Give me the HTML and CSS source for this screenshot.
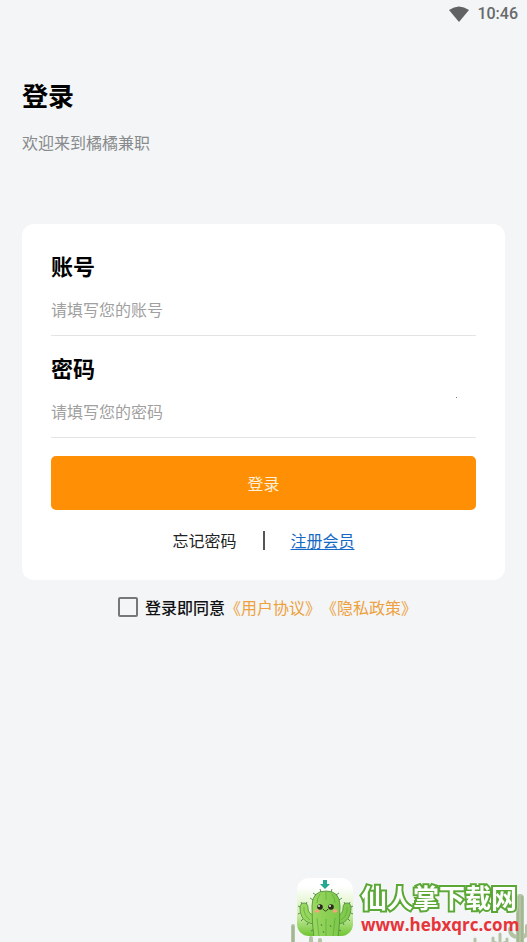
FILE: index.html
```html
<!DOCTYPE html>
<html lang="zh-CN">
<head>
<meta charset="utf-8">
<meta name="viewport" content="width=device-width, initial-scale=1">
<title>登录</title>
<link rel="stylesheet" href="styles.css">
</head>
<body>
<header class="status">
  <svg class="wifi" viewBox="0 0 20 16" aria-hidden="true"><path d="M0 4Q10-3 20 4L10 16Z"/></svg>
  <span>10:46</span>
</header>
<main class="page">
  <h1 class="title">登录</h1>
  <p class="subtitle">欢迎来到橘橘兼职</p>
  <form class="login">
    <section class="card">
      <div class="field">
        <label for="account">账号</label>
        <input id="account" type="text" placeholder="请填写您的账号">
      </div>
      <div class="field secret">
        <label for="password">密码</label>
        <input id="password" type="password" placeholder="请填写您的密码">
      </div>
      <button class="submit" type="submit">登录</button>
      <nav class="links">
        <a class="forgot" href="#forgot">忘记密码</a>
        <span class="divider"></span>
        <a class="register" href="#register">注册会员</a>
      </nav>
    </section>
    <div class="agree">
      <input id="agree" type="checkbox">
      <label for="agree">登录即同意</label>
      <a href="#terms">《用户协议》</a><a href="#privacy">《隐私政策》</a>
    </div>
  </form>
</main>
<aside class="brand">
  <svg class="scenery" viewBox="0 0 240 70" aria-hidden="true">
    <g fill="none" stroke="#b3c4a5" stroke-linecap="round">
      <path stroke-width="4" d="M6 54V72M24 66V72M33 68V72"/>
      <path stroke-width="3" d="M188 67V72M213 62V72M206 66V70L212 72M220 67V70L214 72"/>
      <path stroke-width="8" d="M233 26V72"/>
      <path stroke-width="4" d="M223 57Q223 65 232 65M240 54V61Q239 65 234 65"/>
    </g>
    <path d="M231 24V70M235 24V70M6 54V70" stroke="#93aa82" fill="none"/>
  </svg>
  <svg class="logo" viewBox="0 0 56 58" role="img" aria-label="仙人掌">
    <defs>
      <linearGradient id="tile" x2="0" y2="1"><stop offset=".15" stop-color="#fff"/><stop offset=".6" stop-color="#d5f0b4"/><stop offset="1" stop-color="#6fc531"/></linearGradient>
      <linearGradient id="skin"><stop stop-color="#9bd860"/><stop offset="1" stop-color="#7dc849"/></linearGradient>
      <clipPath id="clip"><rect width="56" height="58" rx="12"/></clipPath>
    </defs>
    <rect width="56" height="58" rx="12" fill="url(#tile)"/>
    <g clip-path="url(#clip)">
      <path d="M17 46C7 45 3 38 3 30Q3 25 7 25T11 30Q11 36 17 37M41 46C50 45 54 38 54 30Q54 25 50 25T46 30Q46 36 41 37" fill="url(#skin)" stroke="#4c8d3b" stroke-width=".8"/>
      <path d="M17 60Q15 46 15 28Q15 13 29 13T43 28Q43 46 41 60Z" fill="url(#skin)" stroke="#4c8d3b" stroke-width=".8"/>
      <path d="M23 16Q20 20 20 25M35 16Q38 20 38 25M29 14V22M20 40Q21 50 22 58M29 41V58M38 40Q37 50 36 58M7 29V33Q8 39 13 42M50 29V33Q49 39 44 42" fill="none" stroke="#59ab40" stroke-width=".7"/>
      <path d="M16 22L13 20M19 17L16 15M24 14L23 11M34 14L35 11M39 17L42 15M42 22L45 20M3 29L1 28M5 26L4 24M9 26L10 24M3 35L1 36M6 41L4 43M11 45L10 47M54 29L56 28M52 26L53 24M48 26L47 24M54 35L56 36M51 41L53 43M46 45L47 47M16 52L14 53M42 52L44 53M24 46L25 48M33 47L34 49M26 53L27 55" stroke="#40763a" stroke-width=".8"/>
      <g fill="#29291d"><circle cx="23" cy="29" r="2.8"/><circle cx="34" cy="29" r="2.8"/></g>
      <g fill="#fff"><circle cx="22" cy="28" r=".9"/><circle cx="33" cy="28" r=".9"/></g>
      <g fill="#f5a47b"><ellipse cx="20" cy="33" rx="2.5" ry="1.7"/><ellipse cx="38" cy="33" rx="2.5" ry="1.7"/></g>
      <path d="M26 31Q28.500 35 31 31" fill="none" stroke="#34451f"/>
    </g>
    <path d="M26 2H30V6H33L28 11L23 6H26Z" fill="#25a890"/>
  </svg>
  <div class="brand-text">
    <strong>仙人掌下载网</strong>
    <span>www.hebxqrc.com</span>
  </div>
</aside>
</body>
</html>
```
FILE: styles.css
```css
* { box-sizing: border-box; }

body {
  margin: 0;
  min-height: 100vh;
  position: relative;
  background: #f3f5f7;
  color: #111;
  font: 16px/24px "Noto Sans CJK SC", sans-serif;
}

h1, p { margin: 0; }

.status {
  display: flex;
  align-items: center;
  justify-content: flex-end;
  gap: 8px;
  height: 28px;
  padding-right: 9px;
  color: #67696b;
  font: 500 16px/28px Roboto, sans-serif;
}

.wifi { width: 20px; height: 16px; fill: #606264; }

.page { padding: 47px 22px 0; }

.title { color: #000; font-size: 26px; line-height: 40px; }

.subtitle { margin-top: 15px; color: #888a8c; }

.card {
  margin-top: 70px;
  padding: 24px 29px 28px;
  border-radius: 12px;
  background: #fff;
}

.field {
  display: flex;
  flex-direction: column;
  gap: 8px;
  margin-bottom: 14px;
  border-bottom: 1px solid #e4e4e4;
}

.field label { color: #000; font-size: 22px; font-weight: 700; line-height: 34px; }

.field input {
  width: 100%;
  height: 45px;
  padding: 0 0 8px;
  border: 0;
  outline: 0;
  background: transparent;
  font: inherit;
}

.field input::placeholder { color: #a0a0a0; opacity: 1; }

.secret { position: relative; }

.secret::after {
  content: "";
  position: absolute;
  top: 47px;
  right: 19px;
  width: 1px;
  height: 1px;
  background: #777;
}

.submit {
  display: block;
  width: 100%;
  height: 54px;
  margin-top: 18px;
  border: 0;
  border-radius: 5px;
  background: #ff9005;
  color: #fff0d8;
  font: inherit;
}

.links {
  display: flex;
  align-items: center;
  justify-content: center;
  gap: 26px;
  margin-top: 18px;
}

.forgot { color: #222; text-decoration: none; }
.register { color: #1769c5; text-decoration-thickness: 1px; text-underline-offset: 2px; }
.divider { width: 2px; height: 19px; background: #555; }

.agree {
  display: flex;
  align-items: center;
  justify-content: center;
  margin-top: 15px;
  padding-left: 8px;
}

.agree input {
  appearance: none;
  width: 20px;
  height: 20px;
  margin: 0 7px 0 0;
  border: 2px solid #777;
  border-radius: 2px;
}

.agree input:checked { background: #ff9005; }
.agree label { font-weight: 500; }
.agree a { color: #eea13d; text-decoration: none; }

.brand {
  position: absolute;
  right: 0;
  bottom: 0;
  display: flex;
  gap: 8px;
  width: 240px;
  height: 70px;
  padding: 6px 0 0 10px;
  overflow: hidden;
}

.scenery { position: absolute; top: 0; left: 0; width: 240px; height: 70px; }
.logo { position: relative; flex: none; width: 56px; height: 58px; }

.brand-text { position: relative; padding-top: 3px; white-space: nowrap; }
.brand-text strong, .brand-text span { display: block; }

.brand-text strong {
  color: #fff;
  font-size: 26px;
  line-height: 32px;
  -webkit-text-stroke: 4px #5ba836;
  paint-order: stroke fill;
  filter: drop-shadow(0 0 1px #fff);
}

.brand-text span {
  margin-top: 2px;
  color: #e73439;
  font: 700 17px/20px "Open Sans", sans-serif;
}
```
